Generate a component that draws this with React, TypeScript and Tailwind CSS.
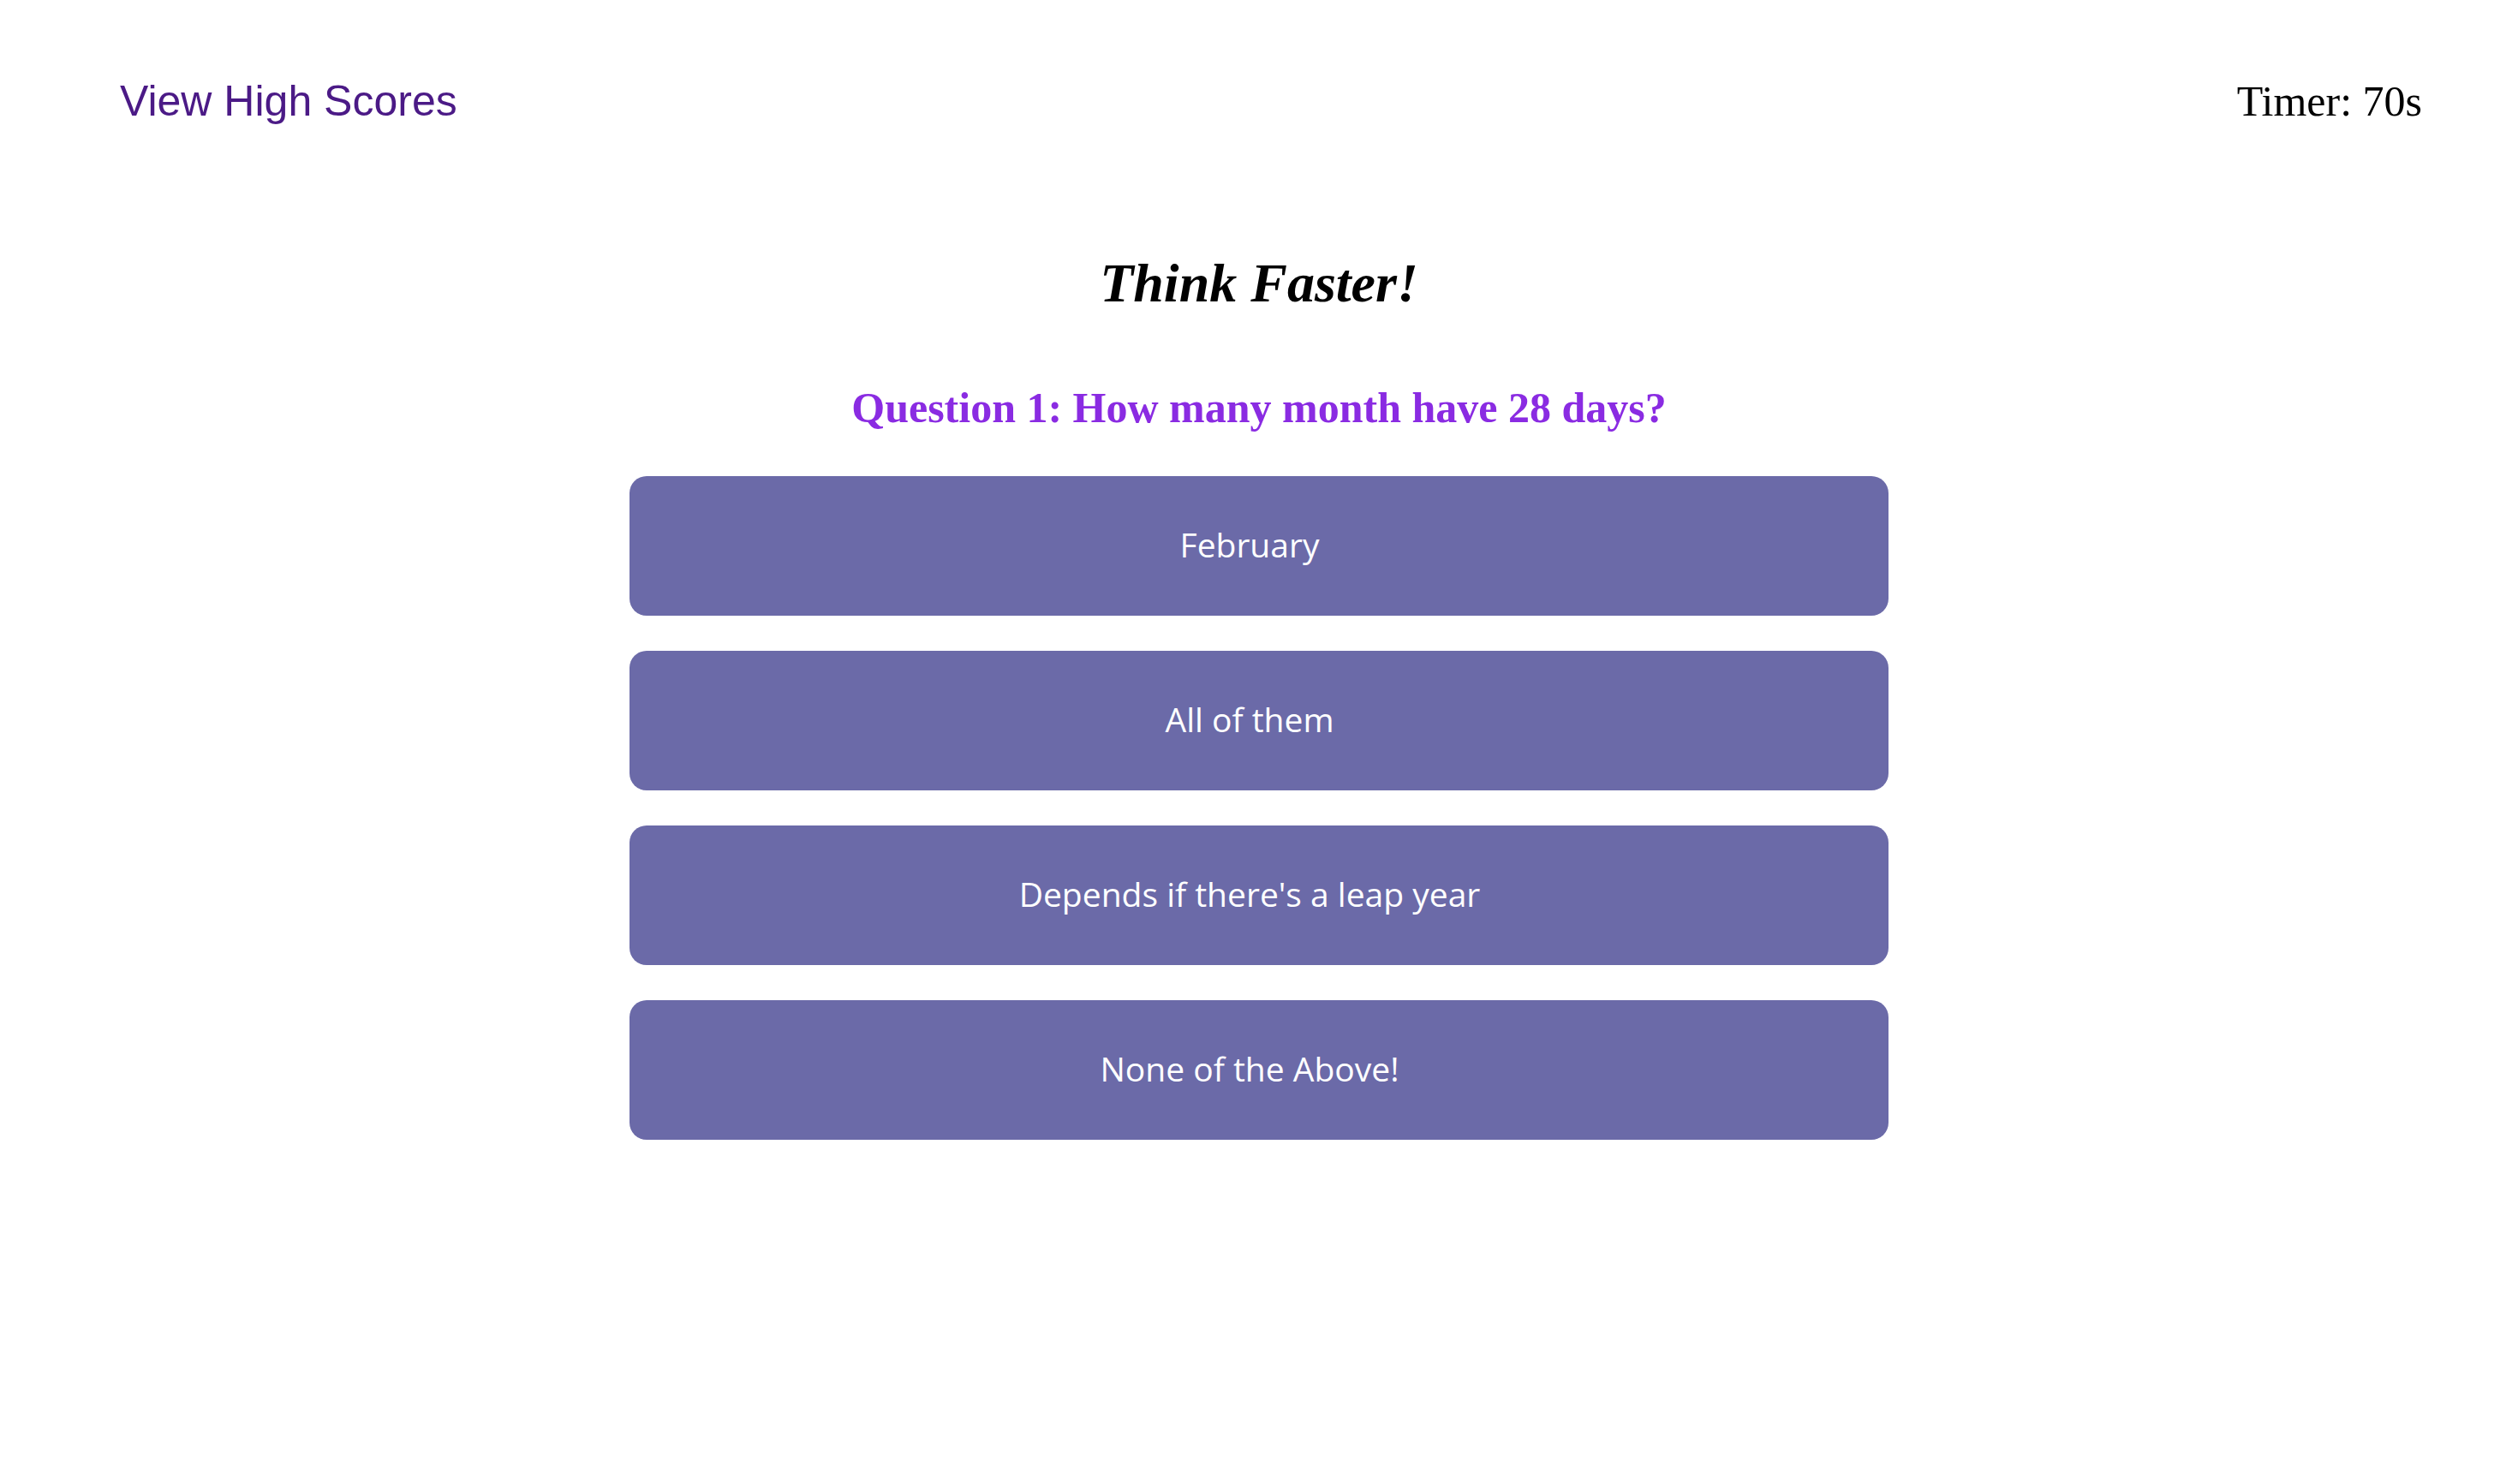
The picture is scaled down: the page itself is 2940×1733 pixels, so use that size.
export default function App() {
  const answers = [
    'February',
    'All of them',
    "Depends if there's a leap year",
    'None of the Above!',
  ];

  return (
    <div className="min-h-screen bg-white">
      {/* Header */}
      <header className="flex items-baseline justify-between pl-[140px] pr-[112px] pt-[93px]">
        <a
          href="#"
          className="text-[50px] leading-none text-[#4b1a86] font-['Liberation_Sans',Arial,sans-serif]"
        >
          View High Scores
        </a>
        <p className="text-[50px] leading-none text-black font-['Liberation_Serif','Times_New_Roman',serif]">
          Timer: 70s
        </p>
      </header>

      {/* Quiz */}
      <main className="flex flex-col items-center">
        <h1 className="mt-[156px] text-[64px] leading-none font-bold italic text-black font-['Liberation_Serif','Times_New_Roman',serif]">
          Think Faster!
        </h1>
        <h2 className="mt-[88px] text-[50px] leading-none font-bold text-[#8a2be2] font-['Liberation_Serif','Times_New_Roman',serif]">
          Question 1: How many month have 28 days?
        </h2>

        <div className="mt-[55px] flex w-1/2 flex-col gap-[41px]">
          {answers.map((answer) => (
            <button
              key={answer}
              className="flex h-[163px] items-center justify-center rounded-[20px] bg-[#6b6aa8] pb-[2px] pr-[22px] text-[39px] font-medium text-white font-['Open_Sans','DejaVu_Sans',sans-serif]"
            >
              {answer}
            </button>
          ))}
        </div>
      </main>
    </div>
  );
}
